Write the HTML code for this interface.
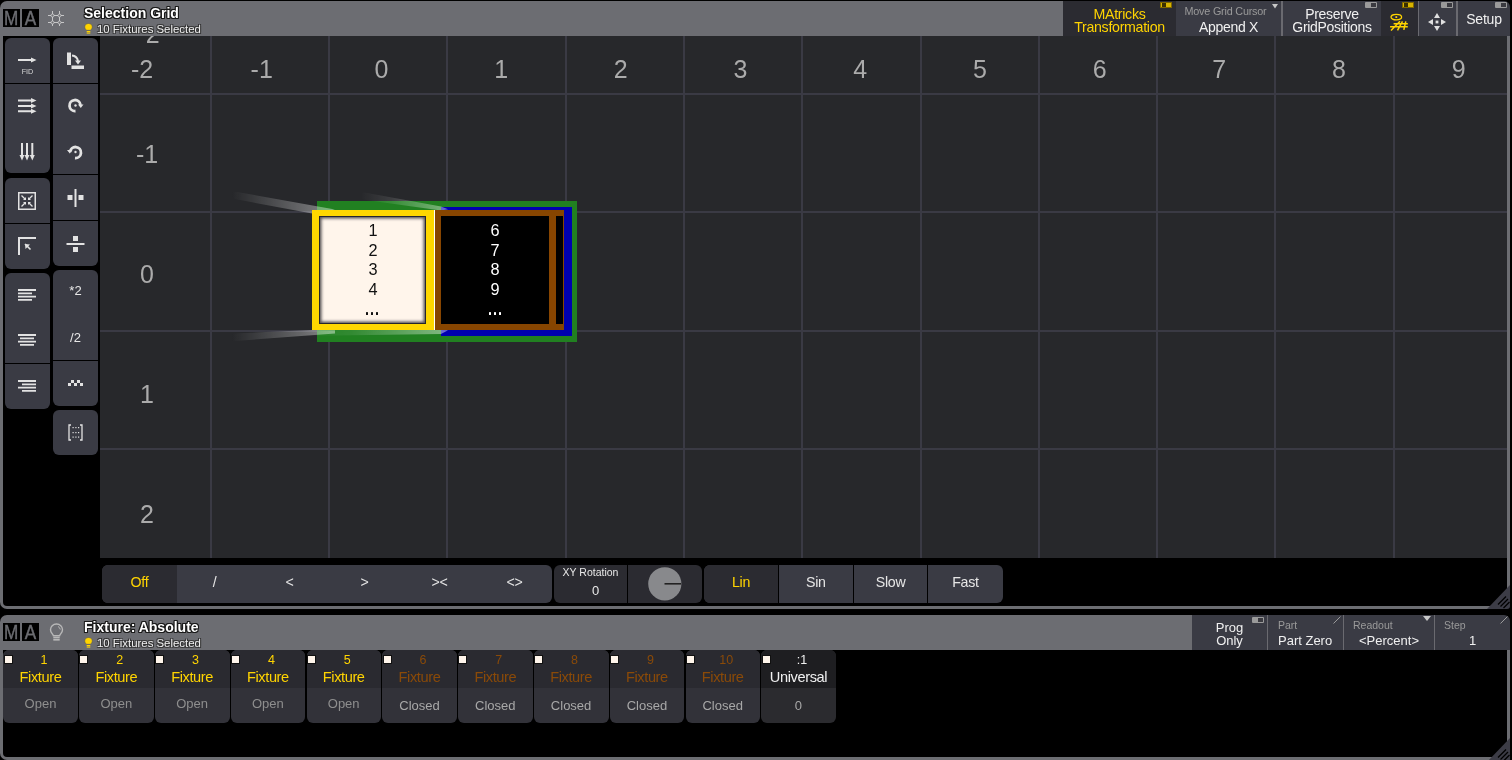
<!DOCTYPE html><html><head><meta charset="utf-8"><style>
*{margin:0;padding:0;box-sizing:border-box}
html,body{width:1512px;height:760px;overflow:hidden;background:#000;font-family:"Liberation Sans",sans-serif}
.a{position:absolute}
.t{position:absolute;white-space:nowrap;line-height:1}
.ttl{font-weight:700;color:#fff;font-size:14px;text-shadow:1px 1px 0 #1a1a1a,-1px -1px 0 #1a1a1a,1px -1px 0 #1a1a1a,-1px 1px 0 #1a1a1a,0 1px 0 #1a1a1a,0 -1px 0 #1a1a1a,1px 0 0 #1a1a1a,-1px 0 0 #1a1a1a}
.sub{color:#eee;font-size:11.4px;text-shadow:1px 1px 0 #333,-1px -1px 0 #333,1px -1px 0 #333,-1px 1px 0 #333}
.logo{background:#000;color:#6c6d72;font-size:19.5px;text-align:center;line-height:18px;-webkit-text-stroke:0.4px #6c6d72}
.logo span{display:inline-block;transform:scaleX(0.88)}
.gl{color:#ababab;font-size:25px;text-align:center;width:60px}
.tb{background:#3a3b44}
.bb{color:#e6e6e6;font-size:14.2px;letter-spacing:-0.3px;text-align:center;line-height:35px;position:absolute;top:0;height:38px}
svg{position:absolute;overflow:visible}
.dots{letter-spacing:1.6px;margin-left:1.6px}
</style></head><body><div id="root" style="position:absolute;left:0;top:0;width:1512px;height:760px;overflow:hidden;will-change:transform">
<div class="a" style="left:0;top:30px;width:1510px;height:579px;border:3px solid #6c6d72;border-top:none;border-radius:0 0 7px 7px"></div>
<div class="a" style="left:0;top:1px;width:1063px;height:35px;background:#6c6d72;border-top-left-radius:7px"></div>
<div class="a logo" style="left:3px;top:9px;width:17px;height:18px"><span>M</span></div>
<div class="a logo" style="left:22px;top:9px;width:17px;height:18px"><span>A</span></div>
<svg style="left:48px;top:11px" width="17" height="15"><g stroke="#d0d0d0" stroke-width="0.9" fill="none"><path d="M4.5 0V15M11.5 0V15M0 4.5H16M0 11.5H16"/></g><g stroke="#d0d0d0" stroke-width="0.8" fill="#6c6d72"><circle cx="4.5" cy="4.5" r="1.5"/><circle cx="11.5" cy="4.5" r="1.5"/><circle cx="4.5" cy="11.5" r="1.5"/><circle cx="11.5" cy="11.5" r="1.5"/></g></svg>
<div class="t ttl" style="left:84px;top:5.5px">Selection Grid</div>
<svg style="left:84px;top:23px" width="9" height="11"><path d="M4.5 0.5 C7 0.5 8.3 2.2 8.3 4 C8.3 5.6 7.2 6.4 6.4 7.3 L2.6 7.3 C1.8 6.4 0.7 5.6 0.7 4 C0.7 2.2 2 0.5 4.5 0.5Z" fill="#ffd400" stroke="#555" stroke-width="0.6"/><rect x="2.7" y="8" width="3.6" height="1.1" fill="#ffd400"/><rect x="2.7" y="9.5" width="3.6" height="1.1" fill="#ffd400"/></svg>
<div class="t sub" style="left:97px;top:24px">10 Fixtures Selected</div>
<div class="a" style="left:1063px;top:1px;width:113px;height:35px;background:#2b2b31"></div>
<div class="a" style="left:1176px;top:1px;width:105px;height:35px;background:#3a3b44"></div>
<div class="a" style="left:1281px;top:1px;width:2px;height:35px;background:#6a6a70"></div>
<div class="a" style="left:1283px;top:1px;width:98px;height:35px;background:#3a3b44"></div>
<div class="a" style="left:1381px;top:1px;width:37px;height:35px;background:#2b2b31"></div>
<div class="a" style="left:1418px;top:1px;width:1px;height:35px;background:#6a6a70"></div>
<div class="a" style="left:1419px;top:1px;width:37px;height:35px;background:#3a3b44"></div>
<div class="a" style="left:1456px;top:1px;width:2px;height:35px;background:#6a6a70"></div>
<div class="a" style="left:1458px;top:1px;width:52px;height:35px;background:#3a3b44;border-top-right-radius:6px"></div>
<div class="a" style="left:1160px;top:2px;width:12px;height:6px;background:#d8b400;border:1px solid #806800"><div class="a" style="left:1px;top:0;width:4px;height:4px;background:#3a3000"></div></div>
<div class="a" style="left:1365px;top:2px;width:12px;height:6px;background:#9a9a9a;border-radius:1px"><div class="a" style="right:1px;top:1px;width:5px;height:4px;background:#3a3a40"></div></div>
<div class="a" style="left:1402px;top:2px;width:12px;height:6px;background:#d8b400;border:1px solid #806800"><div class="a" style="left:1px;top:0;width:4px;height:4px;background:#3a3000"></div></div>
<div class="a" style="left:1441px;top:2px;width:12px;height:6px;background:#9a9a9a;border-radius:1px"><div class="a" style="right:1px;top:1px;width:5px;height:4px;background:#3a3a40"></div></div>
<div class="a" style="left:1495px;top:2px;width:12px;height:6px;background:#9a9a9a;border-radius:1px"><div class="a" style="right:1px;top:1px;width:5px;height:4px;background:#3a3a40"></div></div>
<div class="t" style="left:1063px;width:113px;top:7.5px;text-align:center;color:#ffd400;font-size:14.2px;letter-spacing:-0.3px;line-height:13.3px">MAtricks<br>Transformation</div>
<div class="t" style="left:1173px;width:105px;top:5.5px;text-align:center;color:#9a9a9a;font-size:10.8px;letter-spacing:-0.2px">Move Grid Cursor</div>
<svg style="left:1272px;top:3.5px" width="6" height="5"><path d="M0 0H6L3 4.5Z" fill="#c8c8c8"/></svg>
<div class="t" style="left:1176px;width:105px;top:20px;text-align:center;color:#f0f0f0;font-size:14px;letter-spacing:-0.3px">Append X</div>
<div class="t" style="left:1283px;width:98px;top:8px;text-align:center;color:#f0f0f0;font-size:14px;letter-spacing:-0.3px;line-height:13.3px">Preserve<br>GridPositions</div>
<div class="t" style="left:1458px;width:52px;top:11.5px;text-align:center;color:#f0f0f0;font-size:14px;letter-spacing:-0.2px">Setup</div>
<svg style="left:1385px;top:8px" width="30" height="26"><ellipse cx="11.3" cy="9.1" rx="5.3" ry="2.8" fill="none" stroke="#ffd400" stroke-width="1.3"/><rect x="10.4" y="8.2" width="1.8" height="1.8" fill="#ffd400"/><g stroke="#ffd400" stroke-width="1.5" fill="none"><path d="M6 22.6L15 13.3M12.5 22.3L17.5 13.3M18.8 21.8L20.8 13.3M8.6 15.75H22.8M5.1 18.7H22.8"/></g></svg>
<svg style="left:1427px;top:12px" width="20" height="20"><g fill="#e0e0e0"><path d="M10 1L13 6H7Z"/><path d="M10 19L13 14H7Z"/><path d="M1 10L6 7V13Z"/><path d="M19 10L14 7V13Z"/><rect x="8.6" y="8.6" width="2.8" height="2.8"/></g></svg>
<div class="a" style="left:100px;top:36px;width:1407px;height:522px;background:#27282b;overflow:hidden">
<div class="a" style="left:109.9px;top:0;width:2px;height:522px;background:#3a3a44"></div>
<div class="a" style="left:228.2px;top:0;width:2px;height:522px;background:#3a3a44"></div>
<div class="a" style="left:346.4px;top:0;width:2px;height:522px;background:#3a3a44"></div>
<div class="a" style="left:464.7px;top:0;width:2px;height:522px;background:#3a3a44"></div>
<div class="a" style="left:582.9px;top:0;width:2px;height:522px;background:#3a3a44"></div>
<div class="a" style="left:701.2px;top:0;width:2px;height:522px;background:#3a3a44"></div>
<div class="a" style="left:819.5px;top:0;width:2px;height:522px;background:#3a3a44"></div>
<div class="a" style="left:937.7px;top:0;width:2px;height:522px;background:#3a3a44"></div>
<div class="a" style="left:1056.0px;top:0;width:2px;height:522px;background:#3a3a44"></div>
<div class="a" style="left:1174.2px;top:0;width:2px;height:522px;background:#3a3a44"></div>
<div class="a" style="left:1292.5px;top:0;width:2px;height:522px;background:#3a3a44"></div>
<div class="a" style="left:0;top:57.0px;width:1407px;height:2px;background:#3a3a44"></div>
<div class="a" style="left:0;top:175.0px;width:1407px;height:2px;background:#3a3a44"></div>
<div class="a" style="left:0;top:294.0px;width:1407px;height:2px;background:#3a3a44"></div>
<div class="a" style="left:0;top:412.0px;width:1407px;height:2px;background:#3a3a44"></div>
<div class="t gl" style="left:12.0px;top:20.5px">-2</div>
<div class="t gl" style="left:131.7px;top:20.5px">-1</div>
<div class="t gl" style="left:251.4px;top:20.5px">0</div>
<div class="t gl" style="left:371.1px;top:20.5px">1</div>
<div class="t gl" style="left:490.8px;top:20.5px">2</div>
<div class="t gl" style="left:610.5px;top:20.5px">3</div>
<div class="t gl" style="left:730.2px;top:20.5px">4</div>
<div class="t gl" style="left:849.9px;top:20.5px">5</div>
<div class="t gl" style="left:969.6px;top:20.5px">6</div>
<div class="t gl" style="left:1089.3px;top:20.5px">7</div>
<div class="t gl" style="left:1209.0px;top:20.5px">8</div>
<div class="t gl" style="left:1328.7px;top:20.5px">9</div>
<div class="t gl" style="left:22.599999999999994px;top:-14.5px">2</div>
<div class="t gl" style="left:17px;top:106.0px">-1</div>
<div class="t gl" style="left:17px;top:226.0px">0</div>
<div class="t gl" style="left:17px;top:346.0px">1</div>
<div class="t gl" style="left:17px;top:466.0px">2</div>
</div>
<div class="a" style="left:317px;top:201px;width:260px;height:141px;background:#218021"></div>
<div class="a" style="left:441px;top:207px;width:131px;height:129px;background:#0000b0"></div>
<svg style="left:0;top:0" width="1512" height="760"><defs><linearGradient id="g1" gradientUnits="userSpaceOnUse" x1="232" y1="0" x2="330" y2="0"><stop offset="0" stop-color="#fff" stop-opacity="0"/><stop offset="0.35" stop-color="#fff" stop-opacity="0.14"/><stop offset="1" stop-color="#fff" stop-opacity="0.42"/></linearGradient><linearGradient id="g2" gradientUnits="userSpaceOnUse" x1="360" y1="0" x2="448" y2="0"><stop offset="0" stop-color="#fff" stop-opacity="0"/><stop offset="0.35" stop-color="#fff" stop-opacity="0.1"/><stop offset="1" stop-color="#fff" stop-opacity="0.42"/></linearGradient><linearGradient id="g3" gradientUnits="userSpaceOnUse" x1="232" y1="0" x2="330" y2="0"><stop offset="0" stop-color="#fff" stop-opacity="0"/><stop offset="0.35" stop-color="#fff" stop-opacity="0.14"/><stop offset="1" stop-color="#fff" stop-opacity="0.42"/></linearGradient><linearGradient id="g4" gradientUnits="userSpaceOnUse" x1="300" y1="0" x2="448" y2="0"><stop offset="0" stop-color="#fff" stop-opacity="0"/><stop offset="0.35" stop-color="#fff" stop-opacity="0.08"/><stop offset="1" stop-color="#fff" stop-opacity="0.45"/></linearGradient></defs><path d="M232 191 L335 209.6 L312 213.6 L232 198.5 Z" fill="url(#g1)"/><path d="M362 192 L441 206.5 L448 209.3 L441 210.5 L362 199.5 Z" fill="url(#g2)"/><path d="M232 333.4 L312 330 L335 330.3 L335 333.4 L232 341.2 Z" fill="url(#g3)"/><path d="M300 330 L441 330 L448 330.3 L441 334 L300 336 Z" fill="url(#g4)"/></svg>
<div class="a" style="left:435px;top:210px;width:129px;height:120px;background:#874500"></div>
<div class="a" style="left:441px;top:216px;width:108px;height:108px;background:#000"></div>
<div class="a" style="left:556px;top:216px;width:7px;height:108px;background:#000"></div>
<div class="a" style="left:312px;top:210px;width:122px;height:120px;background:#ffd700"></div>
<div class="a" style="left:434px;top:210px;width:1px;height:120px;background:#fff"></div>
<div class="a" style="left:319px;top:216px;width:107px;height:108px;background:#fff5eb;border:1px solid #25252d;box-shadow:inset 0 0 3px 1.5px rgba(30,28,35,0.75)"></div>
<div class="t" style="left:312px;width:122px;top:221px;text-align:center;color:#111;font-size:16.3px;line-height:19.6px">1<br>2<br>3<br>4</div>
<div class="t" style="left:435px;width:120px;top:221px;text-align:center;color:#fff;font-size:16.3px;line-height:19.6px">6<br>7<br>8<br>9</div>
<div class="a" style="left:366.0px;top:312.3px;width:2.4px;height:2.4px;border-radius:0.6px;background:#111"></div>
<div class="a" style="left:370.9px;top:312.3px;width:2.4px;height:2.4px;border-radius:0.6px;background:#111"></div>
<div class="a" style="left:375.8px;top:312.3px;width:2.4px;height:2.4px;border-radius:0.6px;background:#111"></div>
<div class="a" style="left:488.9px;top:312.3px;width:2.4px;height:2.4px;border-radius:0.6px;background:#fff"></div>
<div class="a" style="left:493.8px;top:312.3px;width:2.4px;height:2.4px;border-radius:0.6px;background:#fff"></div>
<div class="a" style="left:498.7px;top:312.3px;width:2.4px;height:2.4px;border-radius:0.6px;background:#fff"></div>
<div class="a" style="left:5px;top:38px;width:45px;height:135px;background:#3a3b44;border-radius:6px"></div>
<div class="a" style="left:5px;top:83px;width:45px;height:1px;background:#000"></div>
<div class="a" style="left:5px;top:178px;width:45px;height:91px;background:#3a3b44;border-radius:6px"></div>
<div class="a" style="left:5px;top:223px;width:45px;height:1px;background:#000"></div>
<div class="a" style="left:5px;top:273px;width:45px;height:136px;background:#3a3b44;border-radius:6px"></div>
<div class="a" style="left:5px;top:363px;width:45px;height:1px;background:#000"></div>
<div class="a" style="left:53px;top:38px;width:45px;height:228px;background:#3a3b44;border-radius:6px"></div>
<div class="a" style="left:53px;top:83px;width:45px;height:1px;background:#000"></div>
<div class="a" style="left:53px;top:174px;width:45px;height:1px;background:#000"></div>
<div class="a" style="left:53px;top:220px;width:45px;height:1px;background:#000"></div>
<div class="a" style="left:53px;top:270px;width:45px;height:136px;background:#3a3b44;border-radius:6px"></div>
<div class="a" style="left:53px;top:360px;width:45px;height:1px;background:#000"></div>
<div class="a" style="left:53px;top:410px;width:45px;height:45px;background:#3a3b44;border-radius:6px"></div>
<svg style="left:18px;top:57px" width="19" height="6"><path d="M0 3H15" stroke="#e2e2e2" stroke-width="2"/><path d="M13 0.5L18.5 3L13 5.5Z" fill="#e2e2e2"/></svg><div class="t" style="left:5px;width:45px;top:67.5px;text-align:center;color:#d8d8d8;font-size:8px;transform:scaleX(0.9)">FID</div>
<svg style="left:18px;top:98px" width="19" height="15"><g stroke="#e2e2e2" stroke-width="2"><path d="M0 2.5H15M0 8H15M0 13.3H15"/></g><g fill="#e2e2e2"><path d="M13 0L18.5 2.5L13 5Z"/><path d="M13 5.5L18.5 8L13 10.5Z"/><path d="M13 10.8L18.5 13.3L13 15.8Z"/></g></svg>
<svg style="left:19px;top:143px" width="16" height="18"><g stroke="#e2e2e2" stroke-width="2"><path d="M3 0V14M8 0V14M13.3 0V14"/></g><g fill="#e2e2e2"><path d="M0.5 12L3 17.5L5.5 12Z"/><path d="M5.5 12L8 17.5L10.5 12Z"/><path d="M10.8 12L13.3 17.5L15.8 12Z"/></g></svg>
<svg style="left:67px;top:52px" width="18" height="18"><rect x="0" y="0.5" width="4" height="12.5" fill="#e2e2e2"/><rect x="4.5" y="13.5" width="12.5" height="3.5" fill="#e2e2e2"/><path d="M5 3.5 Q10 4 11 9" stroke="#e2e2e2" stroke-width="2" fill="none"/><path d="M8 8.5L11 12.5L14 8.5Z" fill="#e2e2e2"/></svg>
<svg style="left:68px;top:98px" width="16" height="16"><path d="M12.5 7 A5.5 5.5 0 1 0 7.5 13" stroke="#e2e2e2" stroke-width="2.8" fill="none"/><path d="M10 6.5L15.5 6.5L12.8 10Z" fill="#e2e2e2"/><circle cx="7.5" cy="7.5" r="1.2" fill="#e2e2e2"/></svg>
<svg style="left:67px;top:144px" width="16" height="16"><path d="M3 8 A5.5 5.5 0 1 1 8 14" stroke="#e2e2e2" stroke-width="2.8" fill="none"/><path d="M0 8L5.5 8L2.7 4.5Z" fill="#e2e2e2" transform="rotate(180 2.75 7)"/><circle cx="8.5" cy="8" r="1.2" fill="#e2e2e2"/></svg>
<svg style="left:18px;top:192px" width="18" height="18"><rect x="0.75" y="0.75" width="16.5" height="16.5" stroke="#e2e2e2" stroke-width="1.5" fill="none"/><g stroke="#e2e2e2" stroke-width="1.3"><path d="M3.5 3.5L7.5 7.5M14.5 3.5L10.5 7.5M3.5 14.5L7.5 10.5M14.5 14.5L10.5 10.5"/></g><g fill="#e2e2e2"><path d="M8 8L8 5L5 8Z"/><path d="M10 8L13 8L10 5Z"/><path d="M8 10L5 10L8 13Z"/><path d="M10 10L10 13L13 10Z"/></g></svg>
<svg style="left:18px;top:237px" width="19" height="19"><path d="M1 18V1H18" stroke="#e2e2e2" stroke-width="2" fill="none"/><path d="M7 7L12.5 12.5" stroke="#e2e2e2" stroke-width="1.6"/><path d="M7 7L12 7.5L7.5 12Z" fill="#e2e2e2"/></svg>
<svg style="left:67px;top:189px" width="18" height="19"><rect x="7.5" y="0" width="2" height="18" fill="#e2e2e2"/><rect x="0.5" y="6" width="5" height="5" fill="#e2e2e2"/><rect x="11.5" y="6" width="5" height="5" fill="#e2e2e2"/></svg>
<svg style="left:66px;top:235px" width="19" height="18"><rect x="0.5" y="8" width="18" height="2" fill="#e2e2e2"/><rect x="7" y="1" width="5" height="5" fill="#e2e2e2"/><rect x="7" y="12" width="5" height="5" fill="#e2e2e2"/></svg>
<svg style="left:18px;top:289px" width="19" height="12"><g stroke="#e2e2e2" stroke-width="1.8"><path d="M0 1H18M0 4.3H14M0 7.6H18M0 10.9H14"/></g></svg>
<svg style="left:18px;top:334px" width="19" height="12"><g stroke="#e2e2e2" stroke-width="1.8"><path d="M0 1H18M2 4.3H16M0 7.6H18M2 10.9H16"/></g></svg>
<svg style="left:18px;top:380px" width="19" height="12"><g stroke="#e2e2e2" stroke-width="1.8"><path d="M0 1H18M4 4.3H18M0 7.6H18M4 10.9H18"/></g></svg>
<svg style="left:68px;top:380px" width="16" height="7"><g fill="#e2e2e2"><rect x="0" y="3" width="3" height="3"/><rect x="3" y="0" width="3" height="3"/><rect x="6" y="3" width="3" height="3"/><rect x="9" y="0" width="3" height="3"/><rect x="12" y="3" width="3" height="3"/></g></svg>
<svg style="left:68px;top:424px" width="16" height="17"><path d="M3 1H1V16H3M12 1H14V16H12" stroke="#e2e2e2" stroke-width="1.3" fill="none"/><g fill="#e2e2e2"><rect x="4.5" y="3" width="1.2" height="1.2"/><rect x="7.3" y="3" width="1.2" height="1.2"/><rect x="10" y="3" width="1.2" height="1.2"/><rect x="4.5" y="8" width="1.2" height="1.2"/><rect x="7.3" y="8" width="1.2" height="1.2"/><rect x="10" y="8" width="1.2" height="1.2"/><rect x="4.5" y="12.5" width="1.2" height="1.2"/><rect x="7.3" y="12.5" width="1.2" height="1.2"/><rect x="10" y="12.5" width="1.2" height="1.2"/></g></svg>
<div class="t" style="left:53px;width:45px;top:284px;text-align:center;color:#e8e8e8;font-size:13px">*2</div>
<div class="t" style="left:53px;width:45px;top:331px;text-align:center;color:#e8e8e8;font-size:13px">/2</div>
<div class="a" style="left:102px;top:565px;width:450px;height:38px;background:#3a3b44;border-radius:6px;overflow:hidden">
<div class="a" style="left:0;top:0;width:75px;height:38px;background:#2b2b31"></div>
<div class="bb" style="left:0px;width:75px;color:#ffd400">Off</div>
<div class="bb" style="left:75px;width:75px;color:#e6e6e6">/</div>
<div class="bb" style="left:150px;width:75px;color:#e6e6e6">&lt;</div>
<div class="bb" style="left:225px;width:75px;color:#e6e6e6">&gt;</div>
<div class="bb" style="left:300px;width:75px;color:#e6e6e6">&gt;&lt;</div>
<div class="bb" style="left:375px;width:75px;color:#e6e6e6">&lt;&gt;</div>
</div>
<div class="a" style="left:554px;top:565px;width:148px;height:38px;background:#2b2b31;border-radius:6px"></div>
<div class="a" style="left:627px;top:565px;width:1px;height:38px;background:#000"></div>
<div class="t" style="left:554px;width:73px;top:567px;text-align:center;color:#e8e8e8;font-size:10.5px">XY Rotation</div>
<div class="t" style="left:559px;width:73px;top:584px;text-align:center;color:#e8e8e8;font-size:13px">0</div>
<svg style="left:648px;top:567px" width="34" height="34"><circle cx="16.8" cy="16.8" r="16.6" fill="#88898c"/><path d="M16.5 16.8H33" stroke="#222" stroke-width="1.6"/></svg>
<div class="a" style="left:704px;top:565px;width:299px;height:38px;background:#3a3b44;border-radius:6px;overflow:hidden">
<div class="a" style="left:0;top:0;width:74px;height:38px;background:#2b2b31"></div>
<div class="bb" style="left:0.0px;width:74px;color:#ffd400">Lin</div>
<div class="bb" style="left:74.8px;width:74px;color:#e6e6e6">Sin</div>
<div class="a" style="left:73.8px;top:0;width:1px;height:38px;background:#000"></div>
<div class="bb" style="left:149.6px;width:74px;color:#e6e6e6">Slow</div>
<div class="a" style="left:148.6px;top:0;width:1px;height:38px;background:#000"></div>
<div class="bb" style="left:224.4px;width:74px;color:#e6e6e6">Fast</div>
<div class="a" style="left:223.4px;top:0;width:1px;height:38px;background:#000"></div>
</div>
<svg style="left:1487px;top:585px" width="24" height="24"><path d="M23 0V21Q23 24 20 24H0Z" fill="#3c3c46"/><g stroke="#000" stroke-width="1.3"><path d="M11 19.5L19 11.5M13.5 21.5L21 14M16.5 23L22.5 17"/></g></svg>
<div class="a" style="left:0;top:640px;width:1510px;height:120px;border:3px solid #6c6d72;border-top:none;border-radius:0 0 7px 7px"></div>
<div class="a" style="left:0;top:615px;width:1192px;height:35px;background:#6c6d72;border-top-left-radius:7px"></div>
<div class="a logo" style="left:3px;top:623px;width:17px;height:18px"><span>M</span></div>
<div class="a logo" style="left:22px;top:623px;width:17px;height:18px"><span>A</span></div>
<svg style="left:49px;top:623px" width="15" height="18"><path d="M7.5 1C11 1 13.5 3.5 13.5 6.7C13.5 9.5 11.3 10.8 10.6 12.8H4.4C3.7 10.8 1.5 9.5 1.5 6.7C1.5 3.5 4 1 7.5 1Z" stroke="#b8b8b8" stroke-width="1.4" fill="none"/><path d="M9 3.5Q11 4.5 11.3 6.5" stroke="#b8b8b8" stroke-width="1" fill="none"/><rect x="4.3" y="13.8" width="6.4" height="1.6" fill="#b8b8b8"/><rect x="4.3" y="16" width="6.4" height="1.6" fill="#b8b8b8"/></svg>
<div class="t ttl" style="left:84px;top:619.5px">Fixture: Absolute</div>
<svg style="left:84px;top:637px" width="9" height="11"><path d="M4.5 0.5 C7 0.5 8.3 2.2 8.3 4 C8.3 5.6 7.2 6.4 6.4 7.3 L2.6 7.3 C1.8 6.4 0.7 5.6 0.7 4 C0.7 2.2 2 0.5 4.5 0.5Z" fill="#ffd400" stroke="#555" stroke-width="0.6"/><rect x="2.7" y="8" width="3.6" height="1.1" fill="#ffd400"/><rect x="2.7" y="9.5" width="3.6" height="1.1" fill="#ffd400"/></svg>
<div class="t sub" style="left:97px;top:638px">10 Fixtures Selected</div>
<div class="a" style="left:1192px;top:615px;width:75px;height:35px;background:#3a3b44"></div>
<div class="a" style="left:1267px;top:615px;width:1px;height:35px;background:#6a6a70"></div>
<div class="a" style="left:1268px;top:615px;width:75px;height:35px;background:#3a3b44"></div>
<div class="a" style="left:1343px;top:615px;width:1px;height:35px;background:#6a6a70"></div>
<div class="a" style="left:1344px;top:615px;width:90px;height:35px;background:#3a3b44"></div>
<div class="a" style="left:1434px;top:615px;width:1px;height:35px;background:#6a6a70"></div>
<div class="a" style="left:1435px;top:615px;width:75px;height:35px;background:#3a3b44;border-top-right-radius:6px"></div>
<div class="a" style="left:1252px;top:617px;width:12px;height:6px;background:#9a9a9a;border-radius:1px"><div class="a" style="right:1px;top:1px;width:5px;height:4px;background:#3a3a40"></div></div>
<div class="t" style="left:1192px;width:75px;top:622px;text-align:center;color:#f0f0f0;font-size:13px;line-height:12.5px">Prog<br>Only</div>
<div class="t" style="left:1278px;top:620px;color:#9a9a9a;font-size:10.5px">Part</div>
<div class="t" style="left:1278px;top:634px;color:#f0f0f0;font-size:13px">Part Zero</div>
<svg style="left:1333px;top:615.5px" width="8" height="8"><path d="M0.5 7.5L7.5 0.5" stroke="#9a9a9a" stroke-width="1"/></svg>
<div class="t" style="left:1353px;top:620px;color:#9a9a9a;font-size:10.5px">Readout</div>
<div class="t" style="left:1344px;width:90px;top:634px;text-align:center;color:#f0f0f0;font-size:13px">&lt;Percent&gt;</div>
<svg style="left:1423px;top:616px" width="8" height="6"><path d="M0 0H8L4 5Z" fill="#c8c8c8"/></svg>
<div class="t" style="left:1444px;top:620px;color:#9a9a9a;font-size:10.5px">Step</div>
<div class="t" style="left:1435px;width:75px;top:634px;text-align:center;color:#f0f0f0;font-size:13px">1</div>
<svg style="left:1500px;top:615.5px" width="8" height="8"><path d="M0.5 7.5L7.5 0.5" stroke="#9a9a9a" stroke-width="1"/></svg>
<div class="a" style="left:3.4px;top:650px;width:74.5px;height:73px;background:#323239;border-radius:6px;overflow:hidden"><div class="a" style="left:0;top:0;width:100%;height:37.5px;background:#2a2a30"></div></div>
<div class="a" style="left:4.6px;top:656px;width:7px;height:7px;background:#fff5eb;box-shadow:0 0 0 1px #111"></div>
<div class="t" style="left:6.9px;width:74.2px;top:654px;text-align:center;color:#ffd400;font-size:12.5px">1</div>
<div class="t" style="left:3.4px;width:74.2px;top:669.5px;text-align:center;color:#ffd400;font-size:14.6px;letter-spacing:-0.4px">Fixture</div>
<div class="t" style="left:3.4px;width:74.2px;top:697px;text-align:center;color:#8e8e8e;font-size:13px">Open</div>
<div class="a" style="left:79.2px;top:650px;width:74.5px;height:73px;background:#323239;border-radius:6px;overflow:hidden"><div class="a" style="left:0;top:0;width:100%;height:37.5px;background:#2a2a30"></div></div>
<div class="a" style="left:80.4px;top:656px;width:7px;height:7px;background:#fff5eb;box-shadow:0 0 0 1px #111"></div>
<div class="t" style="left:82.7px;width:74.2px;top:654px;text-align:center;color:#ffd400;font-size:12.5px">2</div>
<div class="t" style="left:79.2px;width:74.2px;top:669.5px;text-align:center;color:#ffd400;font-size:14.6px;letter-spacing:-0.4px">Fixture</div>
<div class="t" style="left:79.2px;width:74.2px;top:697px;text-align:center;color:#8e8e8e;font-size:13px">Open</div>
<div class="a" style="left:155.0px;top:650px;width:74.5px;height:73px;background:#323239;border-radius:6px;overflow:hidden"><div class="a" style="left:0;top:0;width:100%;height:37.5px;background:#2a2a30"></div></div>
<div class="a" style="left:156.2px;top:656px;width:7px;height:7px;background:#fff5eb;box-shadow:0 0 0 1px #111"></div>
<div class="t" style="left:158.5px;width:74.2px;top:654px;text-align:center;color:#ffd400;font-size:12.5px">3</div>
<div class="t" style="left:155.0px;width:74.2px;top:669.5px;text-align:center;color:#ffd400;font-size:14.6px;letter-spacing:-0.4px">Fixture</div>
<div class="t" style="left:155.0px;width:74.2px;top:697px;text-align:center;color:#8e8e8e;font-size:13px">Open</div>
<div class="a" style="left:230.8px;top:650px;width:74.5px;height:73px;background:#323239;border-radius:6px;overflow:hidden"><div class="a" style="left:0;top:0;width:100%;height:37.5px;background:#2a2a30"></div></div>
<div class="a" style="left:232.0px;top:656px;width:7px;height:7px;background:#fff5eb;box-shadow:0 0 0 1px #111"></div>
<div class="t" style="left:234.3px;width:74.2px;top:654px;text-align:center;color:#ffd400;font-size:12.5px">4</div>
<div class="t" style="left:230.8px;width:74.2px;top:669.5px;text-align:center;color:#ffd400;font-size:14.6px;letter-spacing:-0.4px">Fixture</div>
<div class="t" style="left:230.8px;width:74.2px;top:697px;text-align:center;color:#8e8e8e;font-size:13px">Open</div>
<div class="a" style="left:306.6px;top:650px;width:74.5px;height:73px;background:#323239;border-radius:6px;overflow:hidden"><div class="a" style="left:0;top:0;width:100%;height:37.5px;background:#2a2a30"></div></div>
<div class="a" style="left:307.8px;top:656px;width:7px;height:7px;background:#fff5eb;box-shadow:0 0 0 1px #111"></div>
<div class="t" style="left:310.1px;width:74.2px;top:654px;text-align:center;color:#ffd400;font-size:12.5px">5</div>
<div class="t" style="left:306.6px;width:74.2px;top:669.5px;text-align:center;color:#ffd400;font-size:14.6px;letter-spacing:-0.4px">Fixture</div>
<div class="t" style="left:306.6px;width:74.2px;top:697px;text-align:center;color:#8e8e8e;font-size:13px">Open</div>
<div class="a" style="left:382.4px;top:650px;width:74.5px;height:73px;background:#323239;border-radius:6px;overflow:hidden"><div class="a" style="left:0;top:0;width:100%;height:37.5px;background:#2a2a30"></div></div>
<div class="a" style="left:383.6px;top:656px;width:7px;height:7px;background:#fff5eb;box-shadow:0 0 0 1px #111"></div>
<div class="t" style="left:385.9px;width:74.2px;top:654px;text-align:center;color:#8a4a08;font-size:12.5px">6</div>
<div class="t" style="left:382.4px;width:74.2px;top:669.5px;text-align:center;color:#8a4a08;font-size:14.6px;letter-spacing:-0.4px">Fixture</div>
<div class="t" style="left:382.4px;width:74.2px;top:698.5px;text-align:center;color:#a8a8a8;font-size:13px">Closed</div>
<div class="a" style="left:458.2px;top:650px;width:74.5px;height:73px;background:#323239;border-radius:6px;overflow:hidden"><div class="a" style="left:0;top:0;width:100%;height:37.5px;background:#2a2a30"></div></div>
<div class="a" style="left:459.4px;top:656px;width:7px;height:7px;background:#fff5eb;box-shadow:0 0 0 1px #111"></div>
<div class="t" style="left:461.7px;width:74.2px;top:654px;text-align:center;color:#8a4a08;font-size:12.5px">7</div>
<div class="t" style="left:458.2px;width:74.2px;top:669.5px;text-align:center;color:#8a4a08;font-size:14.6px;letter-spacing:-0.4px">Fixture</div>
<div class="t" style="left:458.2px;width:74.2px;top:698.5px;text-align:center;color:#a8a8a8;font-size:13px">Closed</div>
<div class="a" style="left:534.0px;top:650px;width:74.5px;height:73px;background:#323239;border-radius:6px;overflow:hidden"><div class="a" style="left:0;top:0;width:100%;height:37.5px;background:#2a2a30"></div></div>
<div class="a" style="left:535.2px;top:656px;width:7px;height:7px;background:#fff5eb;box-shadow:0 0 0 1px #111"></div>
<div class="t" style="left:537.5px;width:74.2px;top:654px;text-align:center;color:#8a4a08;font-size:12.5px">8</div>
<div class="t" style="left:534.0px;width:74.2px;top:669.5px;text-align:center;color:#8a4a08;font-size:14.6px;letter-spacing:-0.4px">Fixture</div>
<div class="t" style="left:534.0px;width:74.2px;top:698.5px;text-align:center;color:#a8a8a8;font-size:13px">Closed</div>
<div class="a" style="left:609.8px;top:650px;width:74.5px;height:73px;background:#323239;border-radius:6px;overflow:hidden"><div class="a" style="left:0;top:0;width:100%;height:37.5px;background:#2a2a30"></div></div>
<div class="a" style="left:611.0px;top:656px;width:7px;height:7px;background:#fff5eb;box-shadow:0 0 0 1px #111"></div>
<div class="t" style="left:613.3px;width:74.2px;top:654px;text-align:center;color:#8a4a08;font-size:12.5px">9</div>
<div class="t" style="left:609.8px;width:74.2px;top:669.5px;text-align:center;color:#8a4a08;font-size:14.6px;letter-spacing:-0.4px">Fixture</div>
<div class="t" style="left:609.8px;width:74.2px;top:698.5px;text-align:center;color:#a8a8a8;font-size:13px">Closed</div>
<div class="a" style="left:685.6px;top:650px;width:74.5px;height:73px;background:#323239;border-radius:6px;overflow:hidden"><div class="a" style="left:0;top:0;width:100%;height:37.5px;background:#2a2a30"></div></div>
<div class="a" style="left:686.8px;top:656px;width:7px;height:7px;background:#fff5eb;box-shadow:0 0 0 1px #111"></div>
<div class="t" style="left:689.1px;width:74.2px;top:654px;text-align:center;color:#8a4a08;font-size:12.5px">10</div>
<div class="t" style="left:685.6px;width:74.2px;top:669.5px;text-align:center;color:#8a4a08;font-size:14.6px;letter-spacing:-0.4px">Fixture</div>
<div class="t" style="left:685.6px;width:74.2px;top:698.5px;text-align:center;color:#a8a8a8;font-size:13px">Closed</div>
<div class="a" style="left:761.4px;top:650px;width:74.5px;height:73px;background:#2b2b2f;border-radius:6px;overflow:hidden"><div class="a" style="left:0;top:0;width:100%;height:37.5px;background:#1e1e21"></div></div>
<div class="a" style="left:762.6px;top:656px;width:7px;height:7px;background:#fff5eb;box-shadow:0 0 0 1px #111"></div>
<div class="t" style="left:764.9px;width:74.2px;top:654px;text-align:center;color:#f0f0f0;font-size:12.5px">:1</div>
<div class="t" style="left:761.4px;width:74.2px;top:669.5px;text-align:center;color:#f0f0f0;font-size:14.6px;letter-spacing:-0.4px">Universal</div>
<div class="t" style="left:761.4px;width:74.2px;top:698.5px;text-align:center;color:#a8a8a8;font-size:13px">0</div>
<svg style="left:1487px;top:738px" width="24" height="24"><path d="M23 0V21Q23 24 20 24H0Z" fill="#3c3c46"/><g stroke="#000" stroke-width="1.3"><path d="M11 19.5L19 11.5M13.5 21.5L21 14M16.5 23L22.5 17"/></g></svg>
</div></body></html>
